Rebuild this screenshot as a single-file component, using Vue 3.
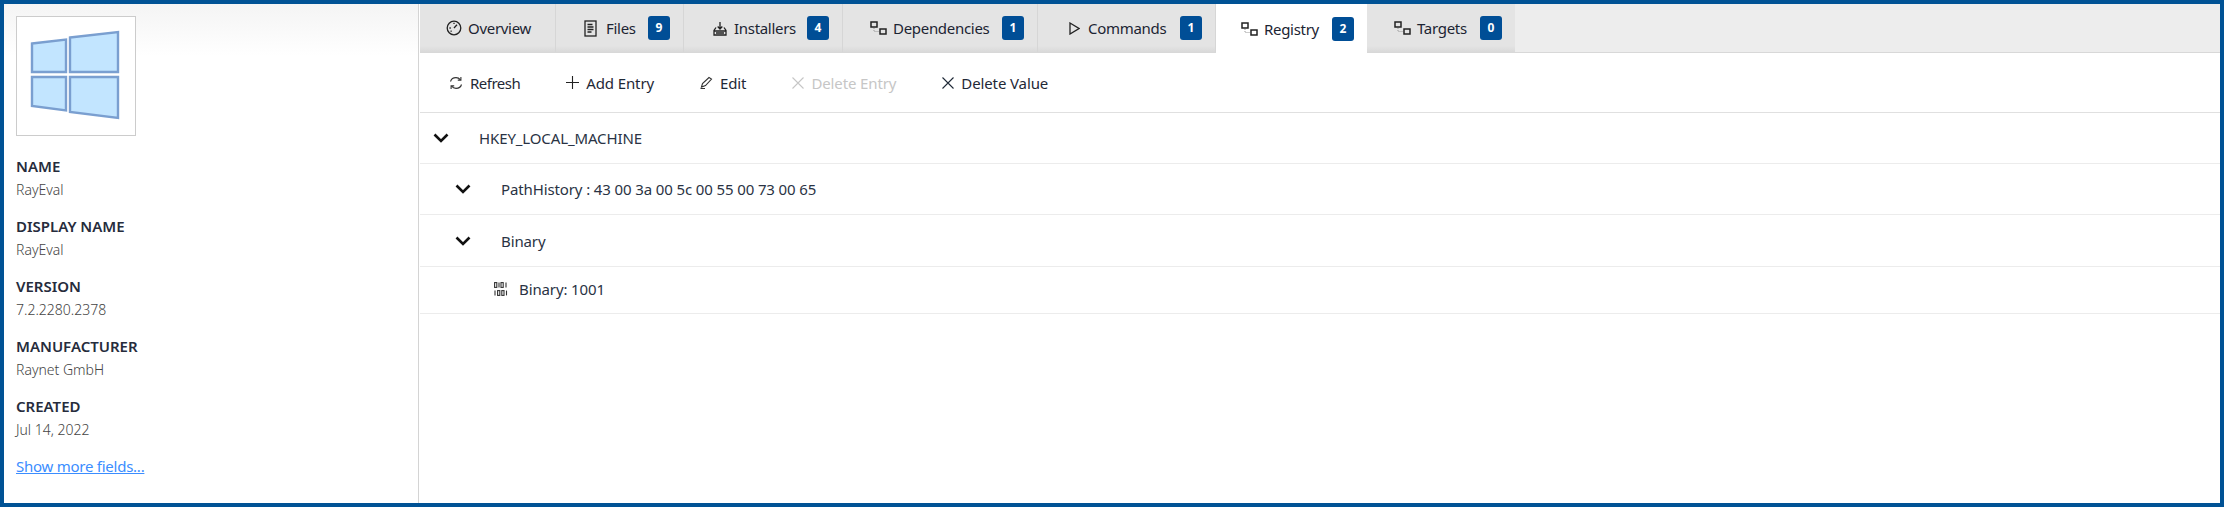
<script setup>
const fields = [
  ['NAME', 'RayEval'],
  ['DISPLAY NAME', 'RayEval'],
  ['VERSION', '7.2.2280.2378'],
  ['MANUFACTURER', 'Raynet GmbH'],
  ['CREATED', 'Jul 14, 2022'],
]
const tabs = [
  { name: 'Overview', icon: 'gauge', cls: 't-over' },
  { name: 'Files', icon: 'file', badge: 9, cls: 't-files' },
  { name: 'Installers', icon: 'install', badge: 4, cls: 't-inst' },
  { name: 'Dependencies', icon: 'dep', badge: 1, cls: 't-dep' },
  { name: 'Commands', icon: 'play', badge: 1, cls: 't-cmd' },
  { name: 'Registry', icon: 'dep', badge: 2, cls: 't-reg', active: true },
  { name: 'Targets', icon: 'dep', badge: 0, cls: 't-tgt' },
]
const tools = [
  { name: 'Refresh', icon: 'refresh' },
  { name: 'Add Entry', icon: 'plus' },
  { name: 'Edit', icon: 'pen' },
  { name: 'Delete Entry', icon: 'x', disabled: true },
  { name: 'Delete Value', icon: 'x' },
]
const rows = [
  { text: 'HKEY_LOCAL_MACHINE', cls: 'r1' },
  { text: 'PathHistory : 43 00 3a 00 5c 00 55 00 73 00 65', cls: 'r2' },
  { text: 'Binary', cls: 'r3' },
]
</script>

<template>
  <div class="frame">
    <aside class="side">
      <div class="thumb">
        <svg viewBox="17 17 118 118" width="118" height="118" class="logo">
          <g fill="#c2e5ff" stroke="#7a9fd0" stroke-width="2.4">
            <polygon points="32,43.5 66,39.5 66,72 32,72" />
            <polygon points="70,37.5 118,32 118,72 70,72" />
            <polygon points="32,77 66,77 66,110.5 32,106" />
            <polygon points="70,77 118,77 118,118 70,112" />
          </g>
        </svg>
      </div>
      <dl class="fields">
        <div v-for="f in fields" :key="f[0]" class="field">
          <dt>{{ f[0] }}</dt>
          <dd>{{ f[1] }}</dd>
        </div>
      </dl>
      <a class="more" href="#">Show more fields...</a>
    </aside>

    <main class="main">
      <nav class="tabs">
        <div v-for="t in tabs" :key="t.name" class="tab" :class="[t.cls, { active: t.active }]">
          <svg v-if="t.icon === 'gauge'" class="ic" width="16" height="16" viewBox="0 0 16 16" fill="none" stroke="#222" stroke-width="1.3">
            <circle cx="8" cy="8" r="6.8" />
            <path d="M8 8l3-3.2M3.4 8h1.4M8 2.8v1.2M4.6 11.6l1-.8" />
          </svg>
          <svg v-else-if="t.icon === 'file'" class="ic" width="13" height="17" viewBox="0 0 13 17" fill="none" stroke="#222" stroke-width="1.3">
            <rect x="1" y="1" width="11" height="15" />
            <path d="M3.5 4.5h5M3.5 7h6M3.5 9.5h6M3.5 12h4" />
          </svg>
          <svg v-else-if="t.icon === 'install'" class="ic" width="14" height="15" viewBox="0 0 14 15" fill="none" stroke="#222" stroke-width="1.3">
            <path d="M3 6.5L1 9.5v4.5h12V9.5l-2-3M1 10h12M3 12h8" />
            <path d="M7 1v6.5M4.7 5.5L7 8l2.3-2.5" />
          </svg>
          <svg v-else-if="t.icon === 'dep'" class="ic" width="17" height="14" viewBox="0 0 17 14" fill="none" stroke="#222" stroke-width="1.5">
            <rect x="1" y="1" width="6" height="5" />
            <rect x="10" y="8" width="6" height="5" />
            <path d="M4 7v3.5h5" stroke="#999" stroke-width="1" stroke-dasharray="1 1" />
          </svg>
          <svg v-else class="ic" width="11" height="13" viewBox="0 0 11 13" fill="none" stroke="#222" stroke-width="1.3">
            <path d="M1 1l9 5.5L1 12z" />
          </svg>
          <span class="tab-name">{{ t.name }}</span>
          <b v-if="t.badge !== undefined" class="badge">{{ t.badge }}</b>
        </div>
        <div class="tab-fill"></div>
      </nav>

      <div class="toolbar">
        <button v-for="b in tools" :key="b.name" class="tool" :class="{ off: b.disabled }" type="button">
          <svg v-if="b.icon === 'refresh'" width="14" height="14" viewBox="0 0 14 14" fill="none" stroke="#333" stroke-width="1.1">
            <path d="M1.5 5.5C2.2 3 4.4 1.6 7 1.6c2 0 3.4.9 4.5 2.2M12.5 8.5c-.7 2.5-2.9 3.9-5.5 3.9-2 0-3.4-.9-4.5-2.2" />
            <path d="M11.9 1v3.1H8.8M2.1 13V9.9h3.1" />
          </svg>
          <svg v-else-if="b.icon === 'plus'" width="13" height="13" viewBox="0 0 13 13" stroke="#222" stroke-width="1.1">
            <path d="M6.5 0v13M0 6.5h13" />
          </svg>
          <svg v-else-if="b.icon === 'pen'" width="13" height="13" viewBox="0 0 13 13" fill="none" stroke="#333" stroke-width="1.1">
            <path d="M1.5 11l1-3.5L9 1.5l2.5 1.5-6 6.5zM.5 12.5h4.5" />
          </svg>
          <svg v-else width="12" height="12" viewBox="0 0 12 12" fill="none" stroke="currentColor" stroke-width="1.1">
            <path d="M.5.5l11 11M11.5.5l-11 11" />
          </svg>
          <span>{{ b.name }}</span>
        </button>
      </div>

      <div class="tree">
        <div v-for="r in rows" :key="r.text" class="row" :class="r.cls">
          <svg class="chev" width="16" height="10" viewBox="0 0 16 10" fill="none" stroke="#111" stroke-width="2.6">
            <path d="M1.5 1.5L8 8l6.5-6.5" />
          </svg>
          <span>{{ r.text }}</span>
        </div>
        <div class="row r4">
          <svg class="bin" width="14" height="14" viewBox="0 0 14 14" fill="none" stroke="#333" stroke-width="1.1">
            <rect x=".6" y=".6" width="2.2" height="4.8" />
            <path d="M5 .6v4.8" />
            <rect x="7" y=".6" width="2.2" height="4.8" />
            <path d="M12 .6v4.8M1 8.6v4.8" />
            <rect x="3.6" y="8.6" width="2.2" height="4.8" />
            <rect x="7.8" y="8.6" width="2.2" height="4.8" />
            <path d="M12.5 8.6v4.8" />
          </svg>
          <span>Binary: 1001</span>
        </div>
      </div>
    </main>
  </div>
</template>

<style>
html, body { margin: 0; overflow: hidden; background: #fff; }
</style>

<style scoped>
.frame {
  box-sizing: border-box;
  width: 2224px;
  height: 507px;
  border: 4px solid #005295;
  display: flex;
  font-family: "Noto Sans", "Open Sans", sans-serif;
  font-size: 15px;
  color: #1f2937;
  letter-spacing: -0.12px;
  background: #fff;
}
.side {
  box-sizing: border-box;
  flex: 0 0 415px;
  border-right: 1px solid #d4d4d4;
  padding: 12px 12px 0;
  background: linear-gradient(#f4f4f4, #fff 52px);
}
.thumb {
  box-sizing: border-box;
  width: 120px;
  height: 120px;
  border: 1px solid #cccccc;
  background: #fff;
}
.logo { display: block; }
.fields { margin: 20px 0 0; }
.field { height: 60px; }
.field dt {
  font-weight: 600;
  line-height: 20px;
  color: #262c3c;
  letter-spacing: 0;
}
.field dd {
  margin: 4px 0 0;
  font-size: 14px;
  font-weight: 300;
  line-height: 20px;
  color: #444;
  letter-spacing: 0;
}
.more {
  display: block;
  margin-top: 0;
  line-height: 20px;
  color: #3b8dff;
  text-decoration: underline;
  letter-spacing: -0.25px;
}
.main {
  flex: 1;
  min-width: 0;
  margin-left: 1px;
  display: flex;
  flex-direction: column;
}
.tabs {
  box-sizing: border-box;
  height: 49px;
  display: grid;
  grid-template-columns: 136px 128px 159px 195px 178px 151px 148px 1fr;
  background: #ededed;
  border-bottom: 1px solid #d8d8d8;
}
.tab {
  box-sizing: border-box;
  height: 48px;
  display: flex;
  align-items: center;
  padding-left: 27px;
  background: linear-gradient(#e4e4e4 42px, #d9d9d9);
  border-right: 1px solid #d6d6d6;
  color: #1c2433;
}
.tab.active {
  height: 49px;
  background: #fff;
  border-right: none;
}
.t-over { padding-left: 26px; }
.t-files { padding-left: 28px; }
.t-inst { padding-left: 29px; }
.t-cmd { padding-left: 31px; }
.t-reg { padding-left: 25px; }
.t-tgt { border-right: none; }
.ic { flex: none; margin-right: 6px; }
.t-files .ic { margin-right: 9px; }
.t-inst .ic { margin-right: 7px; }
.t-cmd .ic { margin-right: 8px; }
.tab-name { white-space: nowrap; letter-spacing: -0.3px; }
.badge {
  box-sizing: border-box;
  width: 22px;
  height: 24px;
  margin-left: auto;
  margin-right: 13px;
  border-radius: 3px;
  background: #004e96;
  color: #fff;
  font-size: 12px;
  font-weight: 700;
  letter-spacing: 0;
  text-align: center;
  line-height: 24px;
}
.toolbar {
  box-sizing: border-box;
  height: 60px;
  display: flex;
  align-items: center;
  gap: 46px;
  padding-left: 29px;
  border-bottom: 1px solid #e0e0e0;
}
.tool {
  display: flex;
  align-items: center;
  gap: 7px;
  padding: 0;
  border: 0;
  background: none;
  font: inherit;
  letter-spacing: inherit;
  color: #1f2937;
}
.tool:first-child span { letter-spacing: -0.5px; }
.tool.off { color: #c6c6c6; }
.row {
  box-sizing: border-box;
  display: flex;
  align-items: center;
  border-bottom: 1px solid #ececec;
  color: #2a3344;
}
.r1 { height: 51px; padding-left: 13px; }
.r2 { height: 51px; padding-left: 35px; }
.r3 { height: 52px; padding-left: 35px; }
.r4 { height: 47px; padding-left: 74px; padding-bottom: 2px; }
.chev { flex: none; margin-right: 30px; }
.bin { flex: none; margin-right: 11px; }
</style>
